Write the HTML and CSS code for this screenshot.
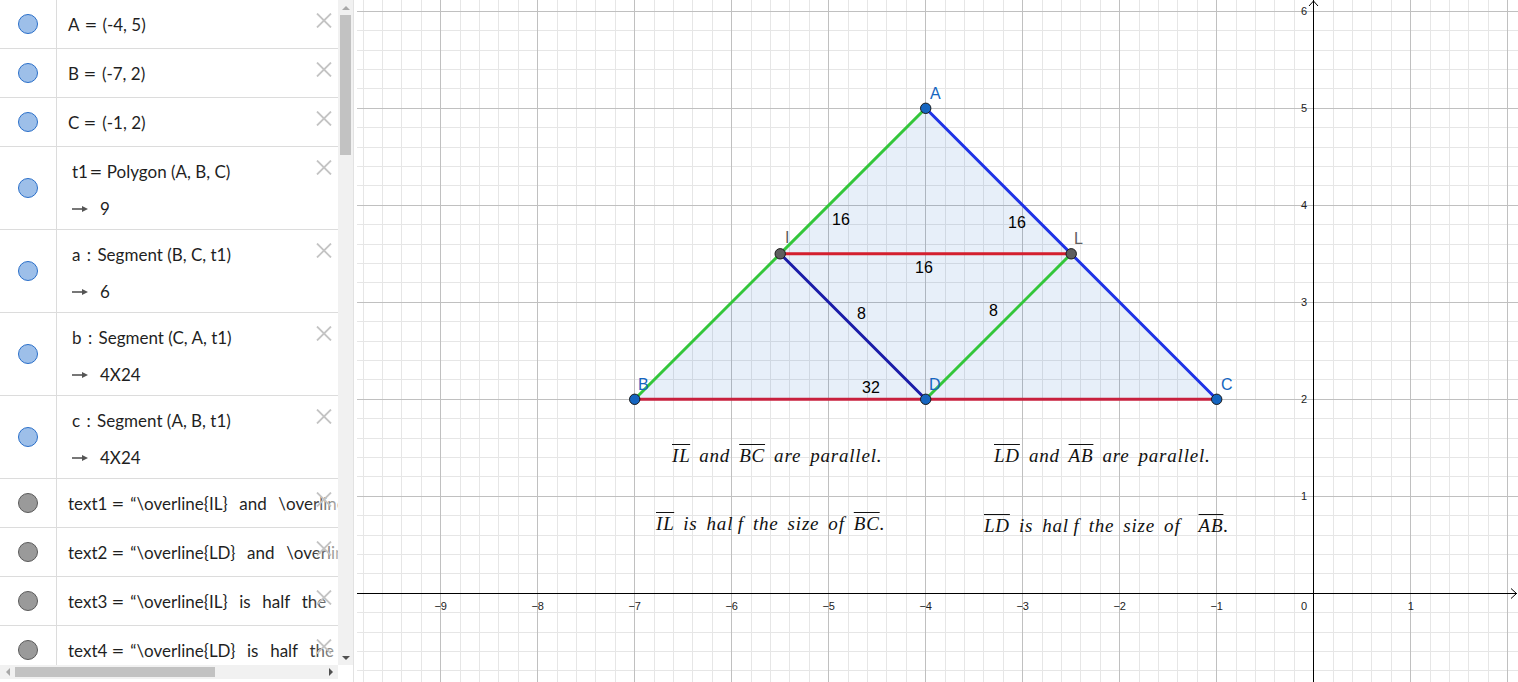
FILE: index.html
```html
<!DOCTYPE html>
<html>
<head>
<meta charset="utf-8">
<link rel="stylesheet" href="styles.css">
</head>
<body>
<div class="app">
  <aside class="algebra">
    <div class="list">
      <div class="row"><div class="mcell"><span class="marble blue"></span></div><div class="content"><div class="ln">A<span class="eq">=</span>(-4, 5)</div></div><svg class="close" viewBox="0 0 16 15"><path d="M1 0.5L15 14.5M15 0.5L1 14.5"/></svg></div>
      <div class="row"><div class="mcell"><span class="marble blue"></span></div><div class="content"><div class="ln">B<span class="eq">=</span>(-7, 2)</div></div><svg class="close" viewBox="0 0 16 15"><path d="M1 0.5L15 14.5M15 0.5L1 14.5"/></svg></div>
      <div class="row"><div class="mcell"><span class="marble blue"></span></div><div class="content"><div class="ln">C<span class="eq">=</span>(-1, 2)</div></div><svg class="close" viewBox="0 0 16 15"><path d="M1 0.5L15 14.5M15 0.5L1 14.5"/></svg></div>
      <div class="row two"><div class="mcell"><span class="marble blue"></span></div><div class="content"><div class="ln">t1<span class="eq tight">=</span>Polygon (A, B, C)</div><div class="ln out"><svg class="arrow" viewBox="0 0 16 8"><path d="M0 4H11"/><path class="head" d="M10 1L16 4L10 7Z"/></svg>9</div></div><svg class="close" viewBox="0 0 16 15"><path d="M1 0.5L15 14.5M15 0.5L1 14.5"/></svg></div>
      <div class="row two"><div class="mcell"><span class="marble blue"></span></div><div class="content"><div class="ln">a <span class="col">:</span> Segment (B, C, t1)</div><div class="ln out"><svg class="arrow" viewBox="0 0 16 8"><path d="M0 4H11"/><path class="head" d="M10 1L16 4L10 7Z"/></svg>6</div></div><svg class="close" viewBox="0 0 16 15"><path d="M1 0.5L15 14.5M15 0.5L1 14.5"/></svg></div>
      <div class="row two"><div class="mcell"><span class="marble blue"></span></div><div class="content"><div class="ln">b <span class="col">:</span> Segment (C, A, t1)</div><div class="ln out"><svg class="arrow" viewBox="0 0 16 8"><path d="M0 4H11"/><path class="head" d="M10 1L16 4L10 7Z"/></svg>4X24</div></div><svg class="close" viewBox="0 0 16 15"><path d="M1 0.5L15 14.5M15 0.5L1 14.5"/></svg></div>
      <div class="row two"><div class="mcell"><span class="marble blue"></span></div><div class="content"><div class="ln">c <span class="col">:</span> Segment (A, B, t1)</div><div class="ln out"><svg class="arrow" viewBox="0 0 16 8"><path d="M0 4H11"/><path class="head" d="M10 1L16 4L10 7Z"/></svg>4X24</div></div><svg class="close" viewBox="0 0 16 15"><path d="M1 0.5L15 14.5M15 0.5L1 14.5"/></svg></div>
      <div class="row txt"><div class="mcell"><span class="marble grey"></span></div><div class="content"><div class="ln">text1<span class="eq">=</span>“\overline{IL}  and  \overline{BC}  are  parallel.”</div></div><svg class="close" viewBox="0 0 16 15"><path d="M1 0.5L15 14.5M15 0.5L1 14.5"/></svg></div>
      <div class="row txt"><div class="mcell"><span class="marble grey"></span></div><div class="content"><div class="ln">text2<span class="eq">=</span>“\overline{LD}  and  \overline{AB}  are  parallel.”</div></div><svg class="close" viewBox="0 0 16 15"><path d="M1 0.5L15 14.5M15 0.5L1 14.5"/></svg></div>
      <div class="row txt"><div class="mcell"><span class="marble grey"></span></div><div class="content"><div class="ln">text3<span class="eq">=</span>“\overline{IL}  is  half  the  size  of  \overline{BC}.”</div></div><svg class="close" viewBox="0 0 16 15"><path d="M1 0.5L15 14.5M15 0.5L1 14.5"/></svg></div>
      <div class="row txt"><div class="mcell"><span class="marble grey"></span></div><div class="content"><div class="ln">text4<span class="eq">=</span>“\overline{LD}  is  half  the  size  of  \overline{AB}.”</div></div><svg class="close" viewBox="0 0 16 15"><path d="M1 0.5L15 14.5M15 0.5L1 14.5"/></svg></div>
    </div>
    <div class="vscroll">
      <div class="sbtn"><span class="tri up off"></span></div>
      <div class="vthumb"></div>
      <div class="spacer"></div>
      <div class="sbtn"><span class="tri down"></span></div>
    </div>
    <div class="hscroll">
      <div class="htrack">
        <div class="sbtn h"><span class="tri left off"></span></div>
        <div class="hthumb"></div>
        <div class="spacer"></div>
        <div class="sbtn h"><span class="tri right"></span></div>
      </div>
    </div>
    <div class="corner"></div>
  </aside>

  <main class="graph">
    <svg class="plane" width="1161" height="682" viewBox="357 0 1161 682">
      <g class="grid" shape-rendering="crispEdges">
        <path class="minor" d="M363.5 0V682M382.5 0V682M401.5 0V682M421.5 0V682M460.5 0V682M479.5 0V682M498.5 0V682M518.5 0V682M557.5 0V682M576.5 0V682M595.5 0V682M615.5 0V682M654.5 0V682M673.5 0V682M692.5 0V682M712.5 0V682M751.5 0V682M770.5 0V682M789.5 0V682M809.5 0V682M848.5 0V682M867.5 0V682M886.5 0V682M906.5 0V682M945.5 0V682M964.5 0V682M983.5 0V682M1003.5 0V682M1042.5 0V682M1061.5 0V682M1080.5 0V682M1100.5 0V682M1139.5 0V682M1158.5 0V682M1177.5 0V682M1197.5 0V682M1236.5 0V682M1255.5 0V682M1274.5 0V682M1294.5 0V682M1333.5 0V682M1352.5 0V682M1371.5 0V682M1391.5 0V682M1430.5 0V682M1449.5 0V682M1468.5 0V682M1488.5 0V682
        M357 30.5H1518M357 50.5H1518M357 69.5H1518M357 88.5H1518M357 127.5H1518M357 147.5H1518M357 166.5H1518M357 185.5H1518M357 224.5H1518M357 244.5H1518M357 263.5H1518M357 282.5H1518M357 321.5H1518M357 341.5H1518M357 360.5H1518M357 379.5H1518M357 418.5H1518M357 438.5H1518M357 457.5H1518M357 476.5H1518M357 515.5H1518M357 535.5H1518M357 554.5H1518M357 573.5H1518M357 612.5H1518M357 632.5H1518M357 651.5H1518M357 670.5H1518"/>
        <path class="major" d="M440.5 0V682M537.5 0V682M634.5 0V682M731.5 0V682M828.5 0V682M925.5 0V682M1022.5 0V682M1119.5 0V682M1216.5 0V682M1410.5 0V682M1507.5 0V682
        M357 11.5H1518M357 108.5H1518M357 205.5H1518M357 302.5H1518M357 399.5H1518M357 496.5H1518"/>
      </g>
      <g class="axes">
        <path shape-rendering="crispEdges" d="M357 593.5H1517M1313.5 0V682"/>
        <path class="arrowhead" d="M1511 588.5L1516.5 593.5L1511 598.5M1309 6L1313.5 1L1318 6"/>
      </g>
      <g class="ticks">
        <text x="440.7" y="609.5">−9</text>
        <text x="537.7" y="609.5">−8</text>
        <text x="634.7" y="609.5">−7</text>
        <text x="731.7" y="609.5">−6</text>
        <text x="828.7" y="609.5">−5</text>
        <text x="925.7" y="609.5">−4</text>
        <text x="1022.7" y="609.5">−3</text>
        <text x="1119.7" y="609.5">−2</text>
        <text x="1216.7" y="609.5">−1</text>
        <text x="1410.7" y="609.5">1</text>
      </g>
      <g class="yticks">
        <text x="1307" y="609.5">0</text>
        <text x="1307" y="500">1</text>
        <text x="1307" y="403">2</text>
        <text x="1307" y="306">3</text>
        <text x="1307" y="209">4</text>
        <text x="1307" y="112">5</text>
        <text x="1307" y="15">6</text>
      </g>
      <polygon class="tri-fill" points="925.7,108.3 634.7,399.3 1216.7,399.3"/>
      <g class="segs">
        <line class="green" x1="634.7" y1="399.3" x2="925.7" y2="108.3"/>
        <line class="blue" x1="925.7" y1="108.3" x2="1216.7" y2="399.3"/>
        <line class="red" x1="634.7" y1="399.3" x2="1216.7" y2="399.3"/>
        <line class="red2" x1="780.2" y1="253.8" x2="1071.2" y2="253.8"/>
        <line class="navy" x1="780.2" y1="253.8" x2="925.7" y2="399.3"/>
        <line class="green" x1="1071.2" y1="253.8" x2="925.7" y2="399.3"/>
      </g>
      <g class="pts">
        <circle class="pb" cx="925.7" cy="108.3" r="5.2"/>
        <circle class="pb" cx="634.7" cy="399.3" r="5.2"/>
        <circle class="pb" cx="1216.7" cy="399.3" r="5.2"/>
        <circle class="pb" cx="925.7" cy="399.3" r="5.2"/>
        <circle class="pg" cx="780.2" cy="253.8" r="5.2"/>
        <circle class="pg" cx="1071.2" cy="253.8" r="5.2"/>
      </g>
      <g class="names">
        <text class="bl" x="930" y="99">A</text>
        <text class="gr" x="785" y="243">I</text>
        <text class="gr" x="1074" y="244">L</text>
        <text class="bl" x="638" y="390">B</text>
        <text class="bl" x="929" y="390">D</text>
        <text class="bl" x="1221" y="390">C</text>
      </g>
      <g class="vals">
        <text x="832" y="225">16</text>
        <text x="1008" y="228">16</text>
        <text x="915" y="273">16</text>
        <text x="857" y="319">8</text>
        <text x="989" y="316">8</text>
        <text x="862" y="393">32</text>
      </g>
    </svg>
    <div class="tex tx1"><span class="ov">IL</span> and <span class="ov">BC</span> are parallel.</div>
    <div class="tex tx2"><span class="ov">LD</span> and <span class="ov">AB</span> are parallel.</div>
    <div class="tex tx3"><span class="ov">IL</span> is hal&#8201;f the size of <span class="ov">BC</span>.</div>
    <div class="tex tx4"><span class="ov">LD</span> is hal&#8201;f the size of &nbsp;<span class="ov">AB</span>.</div>
  </main>
</div>
</body>
</html>
```

FILE: styles.css
```css
* { box-sizing: border-box; margin: 0; padding: 0; }
html, body { width: 1518px; height: 682px; overflow: hidden; background: #fff; }
body { font-family: Lato, "Liberation Sans", sans-serif; color: #1f1f1f; }

.app { display: flex; height: 682px; }

/* ---------- algebra panel ---------- */
.algebra {
  width: 357px;
  flex: none;
  display: grid;
  grid-template-columns: 338px 16px;
  grid-template-rows: 665px 17px;
}
.list { grid-column: 1; grid-row: 1; overflow: hidden; }

.row {
  position: relative;
  display: flex;
  height: 49px;
  border-bottom: 1px solid #dcdcdc;
}
.row.two { height: 83px; }

.mcell {
  width: 57px;
  flex: none;
  border-right: 1px solid #dcdcdc;
  display: flex;
  align-items: center;
  justify-content: center;
}
.marble {
  width: 20px;
  height: 20px;
  border-radius: 50%;
  display: block;
}
.marble.blue { background: #9dbfe9; border: 1px solid #2a6fc9; }
.marble.grey { background: #9a9a9a; border: 1px solid #5a5a5a; }

.content {
  flex: 1;
  min-width: 0;
  overflow: hidden;
  padding: 15px 0 0 11px;
  font-size: 17px;
  line-height: 20px;
  white-space: pre;
}
.row.two .content { padding-left: 15px; }
.row.txt .content { word-spacing: 1.5px; }
.ln { white-space: pre; }
.eq { display: inline-block; margin: 0 7px 0 6px; transform: scaleX(1.3); }
.eq.tight { margin: 0 6px 0 3px; }
.col { margin: 0 2px; }
.out { margin-top: 17px; display: flex; align-items: center; }
.arrow { width: 16px; height: 8px; margin-right: 12px; }
.arrow path { stroke: #555; stroke-width: 1.6; fill: none; }
.arrow path.head { fill: #555; stroke: none; }

.row.txt::after {
  content: "";
  position: absolute;
  right: 0;
  top: 0;
  bottom: 0;
  width: 30px;
  background: linear-gradient(to right, rgba(255,255,255,0), rgba(255,255,255,0.65));
}
.close {
  position: absolute;
  right: 6px;
  top: 13px;
  width: 16px;
  height: 15px;
  z-index: 2;
}
.close path { stroke: #c4c4c4; stroke-width: 1.8; fill: none; }

/* scrollbars */
.vscroll {
  grid-column: 2;
  grid-row: 1;
  background: #f1f1f1;
  border-right: 1px solid #e2e2e2;
  display: flex;
  flex-direction: column;
  align-items: center;
}
.sbtn { width: 15px; height: 15px; flex: none; display: flex; align-items: center; justify-content: center; }
.vthumb { width: 11px; height: 140px; background: #c2c2c2; flex: none; }
.spacer { flex: 1; }
.corner { grid-column: 2; grid-row: 2; border-right: 1px solid #e2e2e2; }
.hscroll { grid-column: 1; grid-row: 2; }
.htrack { height: 14px; background: #f1f1f1; display: flex; align-items: center; }
.sbtn.h { height: 14px; }
.hthumb { width: 200px; height: 10px; background: #c2c2c2; flex: none; }

.tri { width: 0; height: 0; display: block; }
.tri.up { border-left: 4px solid transparent; border-right: 4px solid transparent; border-bottom: 4px solid #505050; }
.tri.down { border-left: 4px solid transparent; border-right: 4px solid transparent; border-top: 4px solid #505050; }
.tri.left { border-top: 4px solid transparent; border-bottom: 4px solid transparent; border-right: 4px solid #505050; }
.tri.right { border-top: 4px solid transparent; border-bottom: 4px solid transparent; border-left: 4px solid #505050; }
.tri.up.off { border-bottom-color: #a8a8a8; }
.tri.left.off { border-right-color: #a8a8a8; }

/* ---------- graphics view ---------- */
.graph { position: relative; flex: 1; height: 682px; overflow: hidden; }
.plane { display: block; }
.grid .minor { stroke: #e6e6e6; stroke-width: 1; fill: none; }
.grid .major { stroke: #c0c0c0; stroke-width: 1; fill: none; }
.axes path { stroke: #000; stroke-width: 1; fill: none; }
.axes .arrowhead { stroke-width: 1; }
.ticks text, .yticks text { font-family: "Liberation Sans", sans-serif; font-size: 11px; fill: #222; }
.ticks text { text-anchor: middle; }
.yticks text { text-anchor: end; }

.tri-fill { fill: #1565c0; fill-opacity: 0.1; stroke: none; }
.segs line { stroke-width: 3; stroke-linecap: round; }
.segs .green { stroke: #33c63a; }
.segs .blue { stroke: #1f33e6; }
.segs .red { stroke: #c8203e; }
.segs .red2 { stroke: #d41f2e; }
.segs .navy { stroke: #1b1ca8; }
.pts circle { stroke: #1a1a1a; stroke-width: 1; }
.pts .pb { fill: #1565c0; }
.pts .pg { fill: #5e5e5e; }
.names text, .vals text { font-family: "Liberation Sans", sans-serif; font-size: 16px; }
.names .bl { fill: #1565c0; }
.names .gr { fill: #5e5e5e; }
.vals text { fill: #000; }

.tex {
  position: absolute;
  font-family: "Liberation Serif", serif;
  font-style: italic;
  font-size: 19px;
  line-height: 19px;
  color: #111;
  white-space: pre;
  letter-spacing: 0.8px;
  word-spacing: 3.5px;
}
.ov { text-decoration: overline; text-decoration-thickness: 1px; }
.tx1 { left: 315px; top: 446px; }
.tx2 { left: 637px; top: 446px; }
.tx3 { left: 299px; top: 514px; }
.tx4 { left: 627px; top: 516px; }
```
